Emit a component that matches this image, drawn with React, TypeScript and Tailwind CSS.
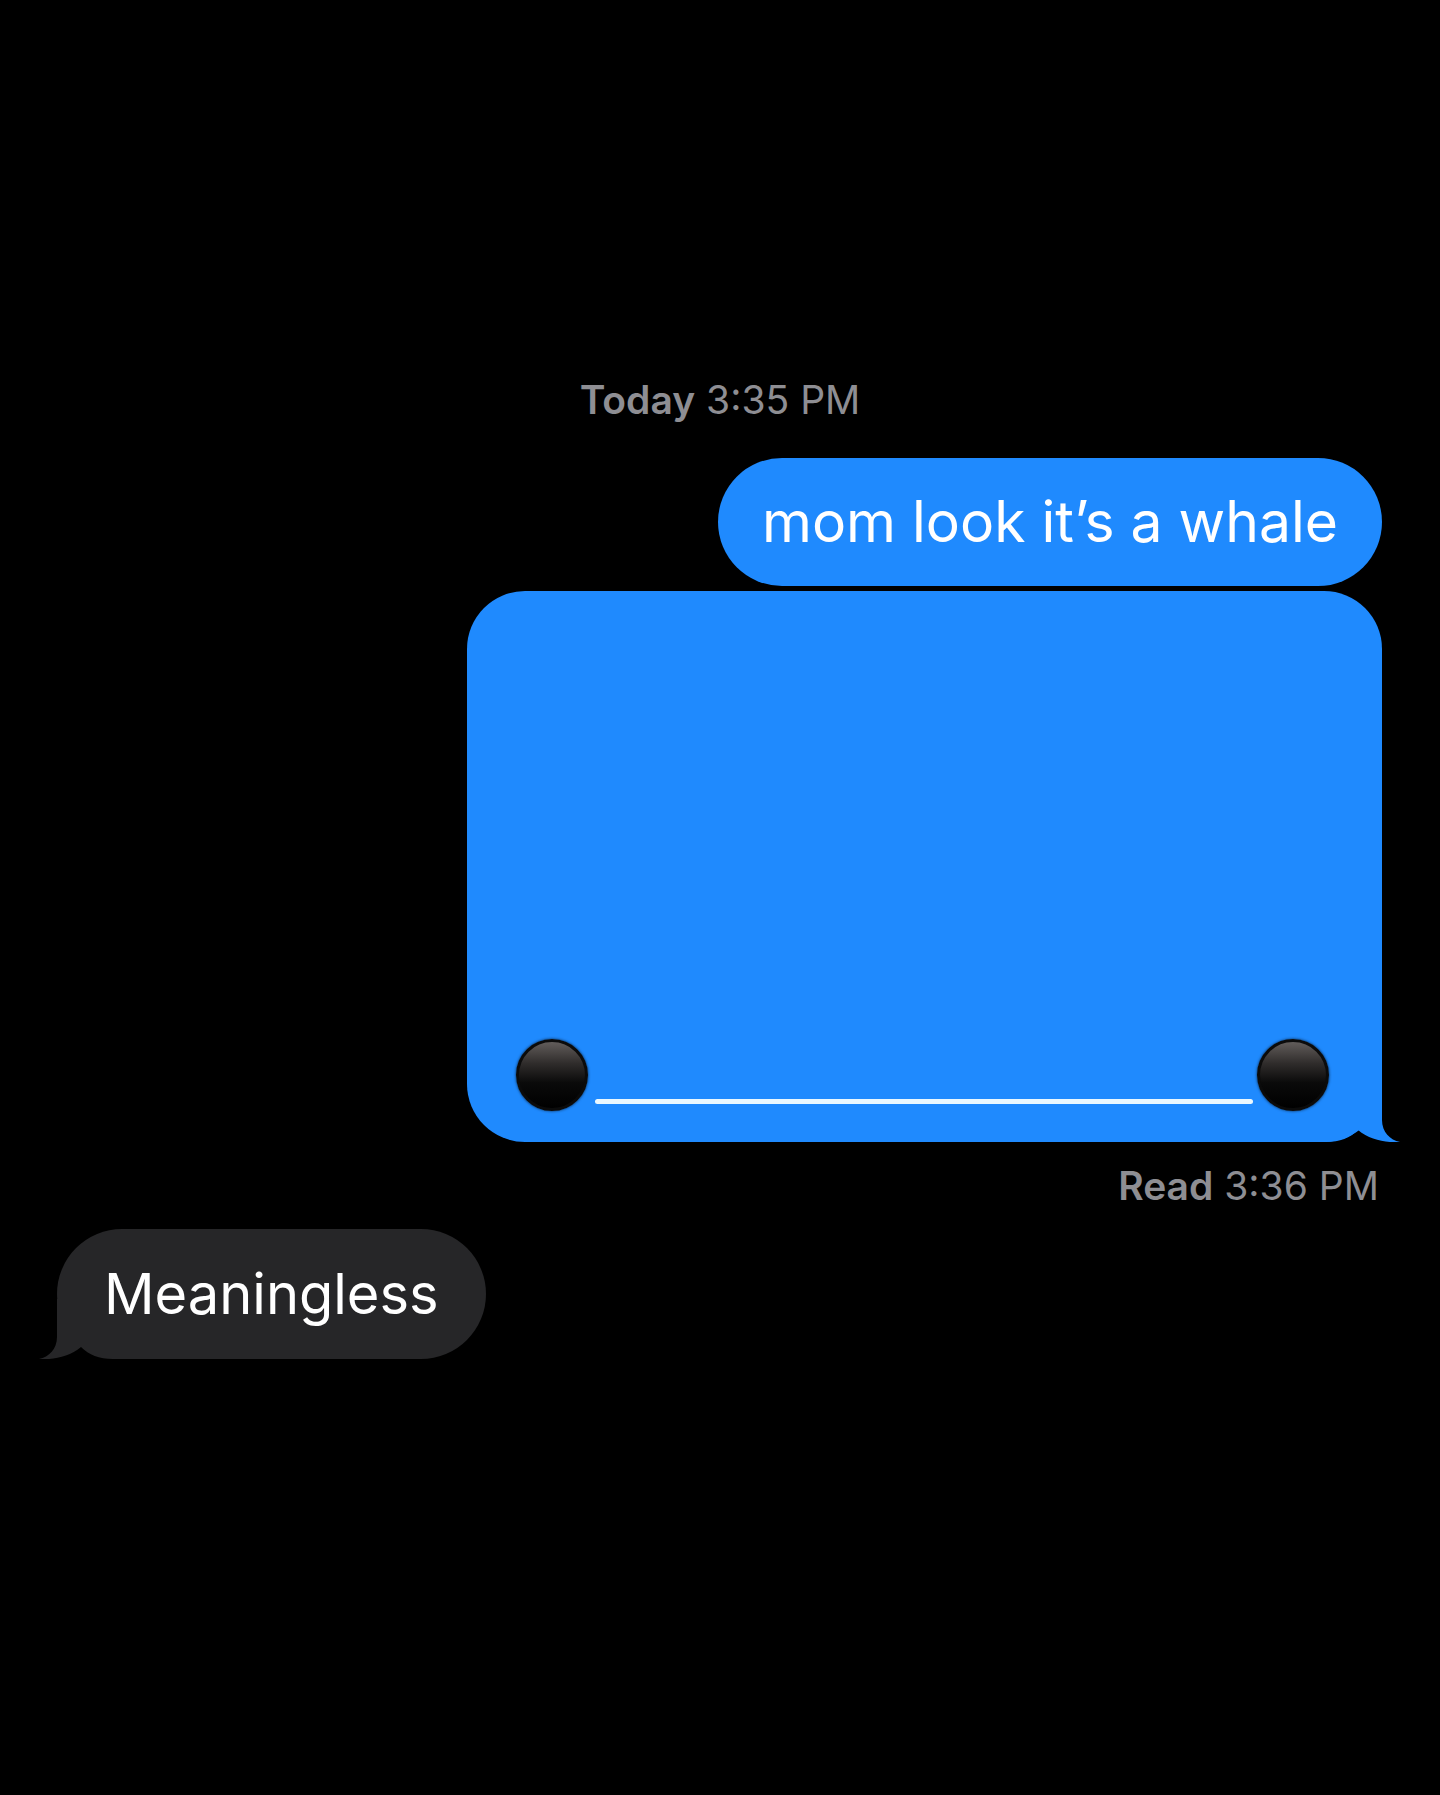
const TAIL_PATH =
  "M0 0H82V38C82 50 90 58 100 60C86 61 70 58 58 48C50 56 40 60 26 60H0Z";

function BubbleTail({ fill, side }: { fill: string; side: "left" | "right" }) {
  return (
    <svg
      viewBox="0 0 100 60"
      width="100"
      height="60"
      fill={fill}
      className={
        side === "right"
          ? "absolute bottom-0 -right-[18px]"
          : "absolute bottom-0 -left-[18px] -scale-x-100"
      }
    >
      <path d={TAIL_PATH} />
    </svg>
  );
}

function Dot() {
  return (
    <div className="h-[72px] w-[72px] shrink-0 rounded-full border-[3px] border-[#0b0b0b] bg-[linear-gradient(180deg,#625d5b_0%,#302d2c_32%,#0a0a0a_62%,#000_100%)] shadow-[0_0_3px_rgba(0,0,0,0.8)]" />
  );
}

export default function App() {
  return (
    <div className="min-h-[1795px] bg-black font-['Inter','Noto_Sans',sans-serif] antialiased">
      <div className="flex flex-col pt-[376px]">
        {/* timestamp */}
        <p className="text-center text-[39px] leading-[48px] text-[#8e8e93]">
          <span className="font-semibold">Today</span> 3:35 PM
        </p>

        {/* outgoing */}
        <div className="mt-[34px] flex flex-col items-end gap-[5px] pr-[58px]">
          <div className="flex h-[128px] items-center rounded-full bg-[#1f8afe] px-[44px] text-[57px] text-white">
            mom look it’s a whale
          </div>
          <div className="relative h-[551px] w-[915px] rounded-[58px] bg-[#1f8afe]">
            <BubbleTail fill="#1f8afe" side="right" />
            <div className="relative flex h-full items-end pb-[31px] pl-[49px] pr-[53px]">
              <Dot />
              <div className="mb-[7px] ml-[7px] mr-[4px] h-[5px] flex-1 rounded-full bg-[#eaf8ff]" />
              <Dot />
            </div>
          </div>
        </div>

        <p className="mt-[20px] pr-[61px] text-right text-[39px] leading-[48px] text-[#8e8e93]">
          <span className="font-semibold">Read</span> 3:36 PM
        </p>

        {/* incoming */}
        <div className="mt-[19px] flex pl-[57px]">
          <div className="relative flex h-[130px] items-center rounded-full bg-[#262628] px-[47px] text-[56px] text-white">
            <BubbleTail fill="#262628" side="left" />
            <span className="relative">Meaningless</span>
          </div>
        </div>
      </div>
    </div>
  );
}
